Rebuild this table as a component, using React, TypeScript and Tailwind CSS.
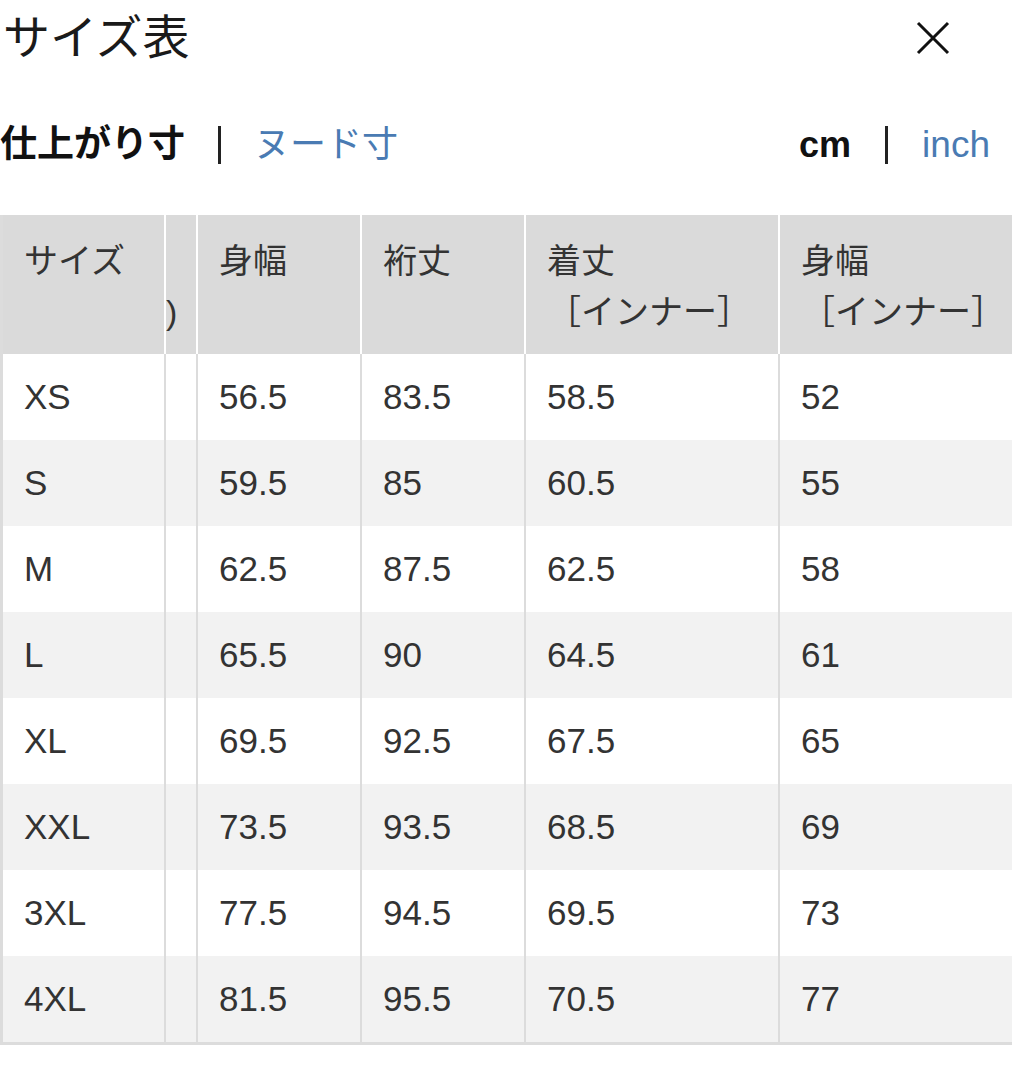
const rows = [
  ["XS", "56.5", "83.5", "58.5", "52"],
  ["S", "59.5", "85", "60.5", "55"],
  ["M", "62.5", "87.5", "62.5", "58"],
  ["L", "65.5", "90", "64.5", "61"],
  ["XL", "69.5", "92.5", "67.5", "65"],
  ["XXL", "73.5", "93.5", "68.5", "69"],
  ["3XL", "77.5", "94.5", "69.5", "73"],
  ["4XL", "81.5", "95.5", "70.5", "77"],
];

const font = { fontFamily: '"Liberation Sans", "Noto Sans CJK JP", sans-serif' };

function HeadCell({ w, children }: { w: string; children?: React.ReactNode }) {
  return (
    <div className={`${w} shrink-0 overflow-hidden border-r-2 border-white pl-[21px] pt-[21px] text-[34px] leading-[51px] text-[#333]`}>
      {children}
    </div>
  );
}

export default function App() {
  return (
    <div className="w-[1012px] h-[1080px] bg-white overflow-hidden text-[#222]" style={font}>
      <div className="flex h-[76px] items-center justify-between pl-[3px] pr-[62px]">
        <h1 className="text-[47px] font-normal text-[#1a1a1a]">サイズ表</h1>
        <svg width="34" height="34" viewBox="0 0 34 34" className="text-[#111]">
          <path d="M2 2 L32 32 M32 2 L2 32" stroke="currentColor" strokeWidth="3" fill="none" />
        </svg>
      </div>

      <div className="mt-[39px] flex h-[60px] items-center justify-between pr-[22px]">
        <div className="flex items-center">
          <span className="text-[37px] font-bold text-[#111]">仕上がり寸</span>
          <span className="mx-[33px] h-[38px] w-[3px] bg-[#222]" />
          <span className="text-[36px] text-[#4a7bb3]">ヌード寸</span>
        </div>
        <div className="flex items-center">
          <span className="text-[36px] font-bold text-[#111]">cm</span>
          <span className="mx-[34px] h-[38px] w-[3px] bg-[#222]" />
          <span className="text-[37px] text-[#4a7bb3]">inch</span>
        </div>
      </div>

      <div className="mt-[40px] border-l-[3px] border-b-[3px] border-[#dcdcdc]">
        <div className="flex h-[139px] bg-[#dadada]">
          <HeadCell w="w-[163px]">サイズ</HeadCell>
          <div className="w-[32px] shrink-0 overflow-hidden border-r-2 border-white pt-[21px] text-[34px] leading-[51px] text-[#333]">
            <br />)
          </div>
          <HeadCell w="w-[164px]">身幅</HeadCell>
          <HeadCell w="w-[164px]">裄丈</HeadCell>
          <HeadCell w="w-[254px]">
            着丈
            <br />
            ［インナー］
          </HeadCell>
          <div className="flex-1 pl-[21px] pt-[21px] text-[34px] leading-[51px] text-[#333]">
            身幅
            <br />
            ［インナー］
          </div>
        </div>
        {rows.map((r, i) => (
          <div key={r[0]} className={`flex h-[86px] items-stretch text-[35px] text-[#333] ${i % 2 === 1 ? "bg-[#f2f2f2]" : "bg-white"}`}>
            <div className="flex w-[163px] shrink-0 items-center border-r-2 border-[#dcdcdc] pl-[21px]">{r[0]}</div>
            <div className="w-[32px] shrink-0 border-r-2 border-[#dcdcdc]" />
            <div className="flex w-[164px] shrink-0 items-center border-r-2 border-[#dcdcdc] pl-[21px]">{r[1]}</div>
            <div className="flex w-[164px] shrink-0 items-center border-r-2 border-[#dcdcdc] pl-[21px]">{r[2]}</div>
            <div className="flex w-[254px] shrink-0 items-center border-r-2 border-[#dcdcdc] pl-[21px]">{r[3]}</div>
            <div className="flex flex-1 items-center pl-[21px]">{r[4]}</div>
          </div>
        ))}
      </div>
    </div>
  );
}
